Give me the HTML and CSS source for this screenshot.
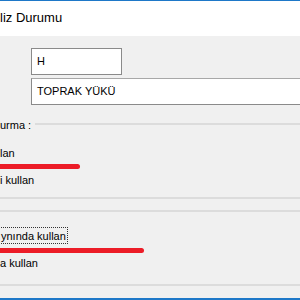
FILE: index.html
```html
<!DOCTYPE html>
<html lang="tr">
<head>
    <meta charset="UTF-8">
    <meta name="viewport" content="width=device-width, initial-scale=1.0">
    <title>Analiz Durumu</title>
    <link rel="stylesheet" href="styles.css">
</head>
<body>
    <div class="window">
        <div class="titlebar">
            <span class="title">liz Durumu</span>
        </div>

        <div class="fields">
            <div class="textbox short">H</div>
            <div class="textbox long">TOPRAK YÜKÜ</div>
        </div>

        <div class="group first">
            <div class="legend">
                <span>urma :</span>
                <div class="rule"></div>
            </div>
            <div class="option opt-1">lan</div>
            <div class="option opt-2">i kullan</div>
            <div class="rule bottom"></div>
        </div>

        <div class="group second">
            <div class="rule"></div>
            <div class="option opt-3"><span class="focused">ynında kullan</span></div>
            <div class="option opt-4">a kullan</div>
            <div class="rule bottom"></div>
        </div>

        <!-- isaretler -->
        <div class="mark mark-1"></div>
        <div class="mark mark-2"></div>
    </div>
</body>
</html>
```

FILE: styles.css
```css
body {
    margin: 0;
    font-family: "Liberation Sans", Arial, sans-serif;
    font-size: 11px;
    color: #000;
    background: #f0f0f0;
    overflow: hidden;
}

.window {
    position: relative;
    width: 300px;
    height: 300px;
    overflow: hidden;
    border-bottom: 2px solid #1e78c8;
    box-sizing: border-box;
}

.titlebar {
    height: 35px;
    background: #fff;
    border-top: 1px solid #1e78c8;
    padding-top: 9px;
    box-sizing: content-box;
    height: 26px;
}

.title {
    font-size: 13px;
    line-height: 15px;
    display: block;
}

.fields {
    padding: 12px 0 0 31px;
}

.textbox {
    height: 27px;
    box-sizing: border-box;
    background: #fff;
    border: 1px solid #8a8a8a;
    padding: 0 5px;
    line-height: 25px;
    white-space: nowrap;
}

.textbox.short {
    width: 91px;
    margin-bottom: 3px;
}

.textbox.long {
    width: 290px;
    border-top-color: #a8a8a8;
}

.legend {
    display: flex;
    align-items: center;
    gap: 4px;
    margin-top: 13px;
    line-height: 14px;
}

.legend .rule {
    flex: 1;
    margin-top: -3px;
}

.rule {
    height: 2px;
    background: #dcdcdc;
}

.option {
    line-height: 14px;
    white-space: nowrap;
}

.opt-1 { margin-top: 14px; }
.opt-2 { margin-top: 13px; }
.first .bottom { margin-top: 10px; }

.second { margin-top: 11px; }
.opt-3 {
    margin-top: 15px;
    display: flex;
}
.opt-4 { margin-top: 12px; }
.second .bottom { margin-top: 14px; }

.focused {
    display: block;
    margin-left: -3px;
    padding: 2px 1px 0 3px;
    line-height: 13px;
    border: 1px dotted #333;
}

.mark {
    position: absolute;
    left: -4px;
    height: 5px;
    border-radius: 3px;
    background: #ec1c27;
}

.mark-1 {
    top: 164px;
    width: 84px;
}

.mark-2 {
    top: 248px;
    width: 148px;
}
```
